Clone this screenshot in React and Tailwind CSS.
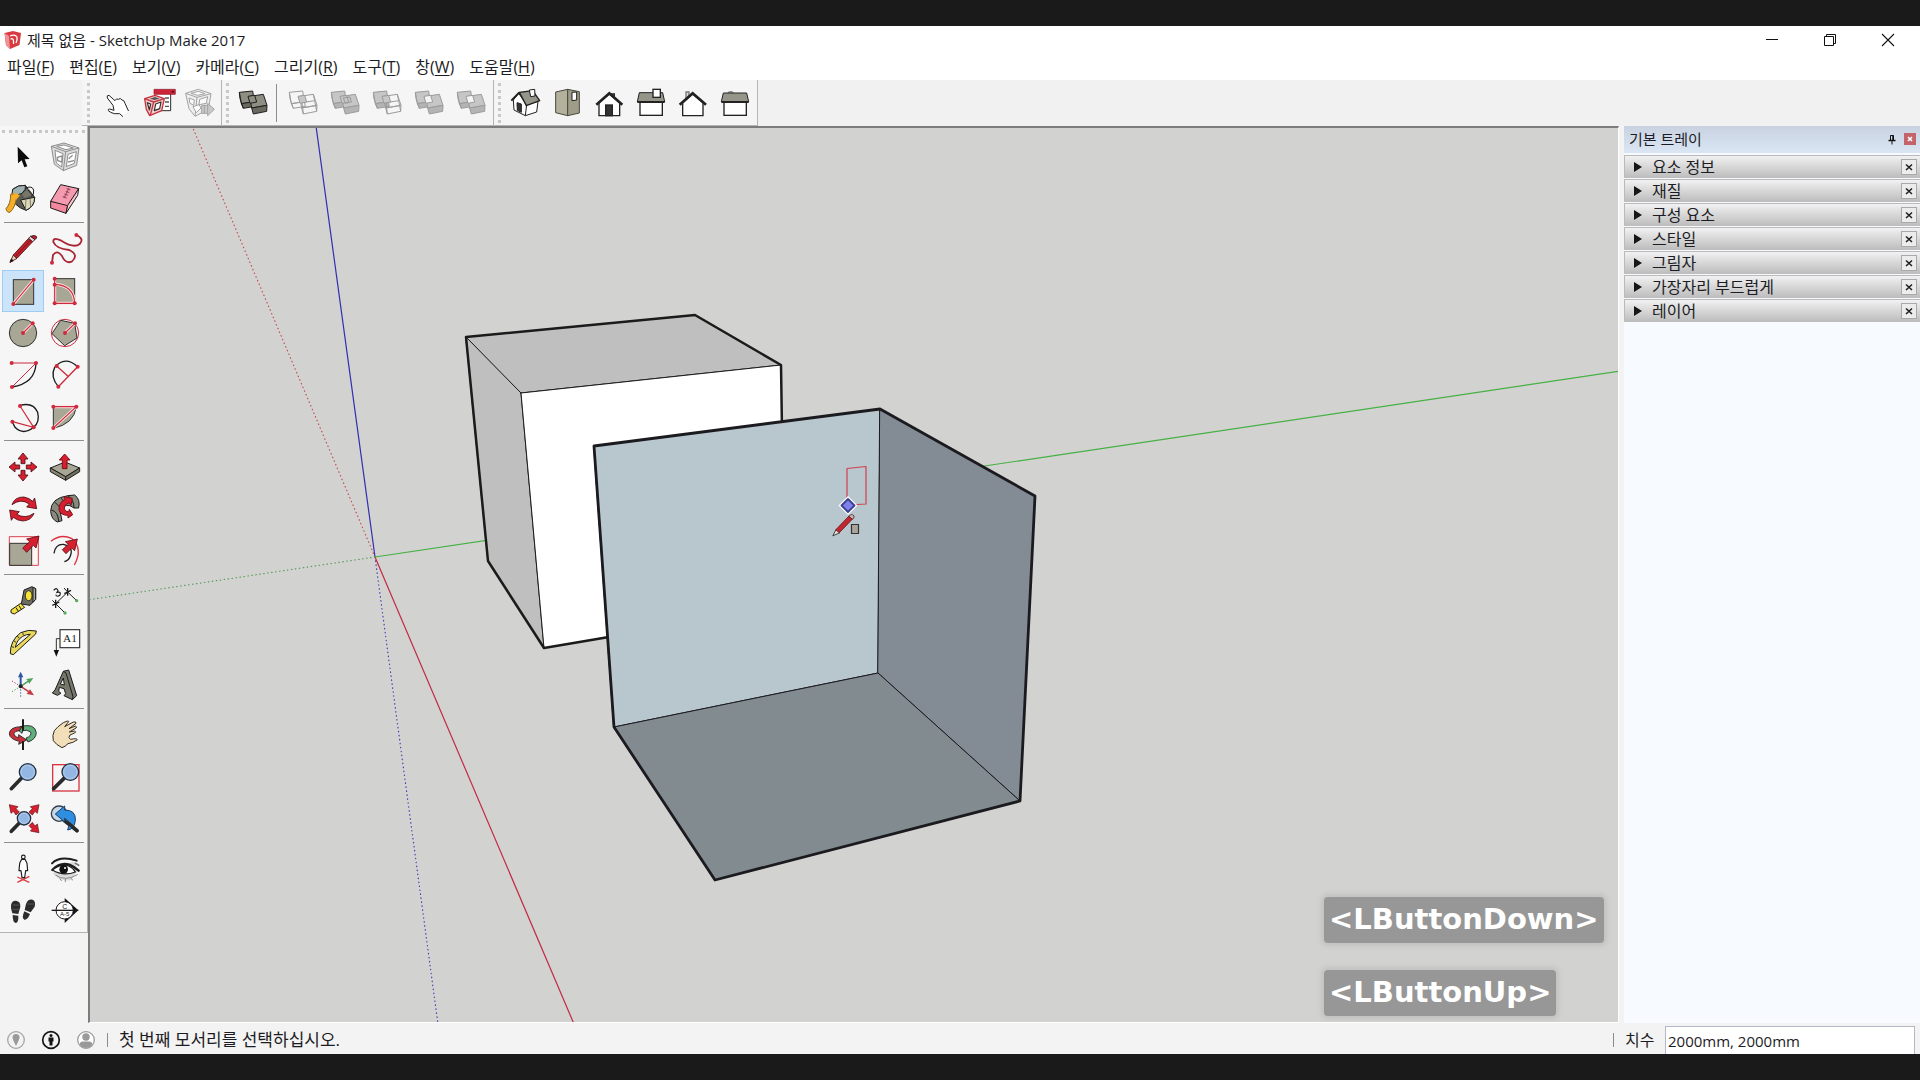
import React from "react";

const UI = "font-['Open_Sans','Noto_Sans_CJK_KR',sans-serif]";

const RED = "#d6202f";
const DARK = "#1c1c1c";
const CLAY = "#a8a795";

/* ---------- shared icon parts ---------- */

function Dots({ pts, r = 6 }) {
  return pts.map(([x, y]) => <circle key={`${x}-${y}`} cx={x} cy={y} r={r} fill="#cf2a3c" />);
}

function RedLine({ d }) {
  return (
    <g fill="none">
      <path d={d} stroke="#fbe3e3" strokeWidth="9" />
      <path d={d} stroke="#cf2a3c" strokeWidth="3.4" />
    </g>
  );
}

function Lens({ cx, cy, r, hx, hy }) {
  return (
    <g>
      <path d={`M${cx - r * 0.7} ${cy + r * 0.7} L${hx} ${hy}`} stroke="#2a2a2a" strokeWidth="11" strokeLinecap="round" />
      <circle cx={cx} cy={cy} r={r} fill="#8fb4e3" stroke="#232f3d" strokeWidth="4" />
      <circle cx={cx} cy={cy} r={r - 5} fill="#93b6e2" stroke="#c3d7f0" strokeWidth="2" />
    </g>
  );
}

/* ---------- left palette ---------- */

const palette = [
  [
    { name: "선택", vb: "6 48 126 126", art: <path d="M53 80 L54 130 L65 121 L73 142 L82 139 L74 118 L89 117 Z" fill="#0c0c0c" /> },
    {
      name: "구성요소 만들기",
      vb: "132 48 126 126",
      art: (
        <g fill="#dcdcdc" stroke="#8e8e8e" strokeWidth="3" strokeLinejoin="round">
          <path d="M154 79 L192 69 L237 84 L230 136 L190 152 L163 133 Z" />
          <path d="M154 79 L197 95 L237 84 M197 95 L190 152" fill="none" />
          <path d="M165 91 L189 101 L185 141 L169 129 Z M204 103 L229 95 L223 130 L199 140 Z" fill="#fff" />
          <path d="M170 79 L192 75 L220 84 L198 89 Z" fill="#fff" />
          <path d="M172 112 L186 108 L186 126 L173 122 Z M206 116 L218 106 M204 126 L222 122" fill="none" strokeWidth="4" />
        </g>
      ),
    },
    {
      name: "페인트통",
      vb: "6 174 126 126",
      art: (
        <g transform="translate(0 -6)" stroke={DARK} strokeWidth="3" strokeLinejoin="round">
          <path d="M38 214 Q54 200 76 202 L104 238 Q104 266 78 277 Q60 272 44 256 Z" fill="#5d5c52" />
          <path d="M62 246 L104 238 Q104 266 78 277 Z" fill="#dcd7b8" />
          <path d="M78 242 L76 276 M90 240 L92 268" stroke="#6b695a" strokeWidth="2.5" />
          <path d="M38 214 Q54 200 76 202 Q80 214 66 226 Q48 236 36 228 Z" fill="#9fb1b0" />
          <path d="M66 228 L86 212 L98 230 L74 240 Z" fill="#77766a" stroke="none" />
          <path d="M78 210 Q96 202 101 216 Q103 230 94 236 M84 216 Q92 226 98 232" fill="none" />
          <path d="M32 229 Q46 224 50 238 Q46 268 30 283 Q20 284 18 272 Q32 258 32 229 Z" fill="#f6ad27" stroke="#8a6418" />
          <path d="M36 226 Q50 224 60 232 L48 246 Q46 232 36 226 Z" fill="#f6ad27" stroke="none" />
        </g>
      ),
    },
    {
      name: "지우개",
      vb: "132 174 126 126",
      art: (
        <g stroke={DARK} strokeWidth="3" strokeLinejoin="round">
          <path d="M182 194 L236 206 L203 266 L152 244 Z" fill="#f59aaf" />
          <path d="M152 244 L203 257 L198 280 L152 264 Z" fill="#f4879e" />
          <path d="M236 206 L233 226 L198 280 L203 256 Z" fill="#fbc5cf" />
          <path d="M207 204 L192 234 M200 206 L211 210 M197 214 L208 218 M193 222 L204 226 M188 230 L200 234" stroke="#8d4656" strokeWidth="3" fill="none" />
        </g>
      ),
    },
  ],
  [
    {
      name: "선",
      vb: "6 324 126 126",
      art: (
        <g stroke="#3b1113" strokeWidth="2.5" strokeLinejoin="round">
          <path d="M30 427 L40 405 L51 415 Z" fill="#e6d4ae" />
          <path d="M30 427 L34 417 L40 422 Z" fill="#111" />
          <path d="M40 405 L86 355 L98 365 L51 415 Z" fill="#c6202c" />
          <path d="M47 409 L92 360" stroke="#7b1219" strokeWidth="3" />
          <path d="M86 355 L92 349 L105 359 L98 365 Z" fill="#d8d8d8" />
          <path d="M92 349 Q104 343 110 350 Q111 355 105 359 Z" fill="#b92331" />
        </g>
      ),
    },
    {
      name: "자유로운 곡선",
      vb: "132 324 126 126",
      art: (
        <g>
          <path d="M229 345 Q254 356 239 372 Q222 386 184 362 Q158 350 160 366 Q168 386 208 390 Q238 405 215 425 Q196 432 186 408 Q172 388 159 405 L156 428" fill="none" stroke="#a72535" strokeWidth="5.5" />
          <Dots pts={[[229, 345], [156, 428]]} />
        </g>
      ),
    },
    {
      name: "직사각형",
      active: true,
      vb: "6 450 126 126",
      art: (
        <g>
          <rect x="40" y="479" width="61" height="74" fill={CLAY} stroke="#333" strokeWidth="3" />
          <RedLine d="M40 552 L101 479" />
          <Dots pts={[[40, 552], [101, 479]]} />
        </g>
      ),
    },
    {
      name: "회전된 직사각형",
      vb: "132 450 126 126",
      art: (
        <g>
          <rect x="164" y="476" width="60" height="74" fill={CLAY} stroke="#333" strokeWidth="3" />
          <RedLine d="M164 476 V550 H224 M164 493 Q222 496 224 550" />
          <Dots pts={[[164, 476], [164, 494], [164, 550], [224, 550]]} />
        </g>
      ),
    },
    {
      name: "원",
      vb: "6 576 126 126",
      art: (
        <g>
          <circle cx="69" cy="639" r="41" fill={CLAY} stroke="#333" strokeWidth="3" />
          <RedLine d="M69 639 L98 610" />
          <Dots pts={[[69, 639], [98, 610]]} />
        </g>
      ),
    },
    {
      name: "다각형",
      vb: "132 576 126 126",
      art: (
        <g>
          <circle cx="195" cy="639" r="41" fill="none" stroke="#cf2a3c" strokeWidth="3" />
          <path d="M182 601 L224 610 L231 654 L194 677 L156 641 Z" fill={CLAY} stroke="#333" strokeWidth="3" />
          <RedLine d="M195 639 L225 610" />
          <Dots pts={[[195, 639], [225, 610]]} />
        </g>
      ),
    },
    {
      name: "호",
      vb: "6 702 126 126",
      art: (
        <g fill="none">
          <path d="M108 729 Q106 790 36 801" stroke={DARK} strokeWidth="4" />
          <path d="M35 729 H108 L36 801" stroke="#cf2a3c" strokeWidth="3" />
          <Dots pts={[[35, 729], [108, 729], [36, 801]]} />
        </g>
      ),
    },
    {
      name: "2점 호",
      vb: "132 702 126 126",
      art: (
        <g fill="none">
          <path d="M175 800 Q150 770 164 742 Q195 706 233 740" stroke={DARK} strokeWidth="4" />
          <path d="M175 800 L233 740 M170 738 L204 769" stroke="#cf2a3c" strokeWidth="4" />
          <Dots pts={[[175, 800], [233, 740], [170, 738]]} />
        </g>
      ),
    },
    {
      name: "3점 호",
      vb: "6 828 126 126",
      art: (
        <g fill="none">
          <path d="M60 856 Q100 846 113 877 Q120 906 101 922 Q70 947 45 922 L37 906" stroke={DARK} strokeWidth="4" />
          <path d="M60 858 L101 922 L37 905" stroke="#cf2a3c" strokeWidth="3.5" />
          <Dots pts={[[60, 858], [101, 922], [37, 905]]} />
        </g>
      ),
    },
    {
      name: "파이",
      vb: "132 828 126 126",
      art: (
        <g>
          <path d="M160 860 H229 Q222 912 160 925 Z" fill={CLAY} stroke="#333" strokeWidth="3" />
          <RedLine d="M160 860 H229 L160 924" />
          <Dots pts={[[160, 860], [229, 860], [160, 924]]} />
        </g>
      ),
    },
  ],
  [
    {
      name: "이동",
      vb: "6 48 126 126",
      art: (
        <g fill={RED} stroke="#4c0e14" strokeWidth="2.5" strokeLinejoin="round">
          <path d="M69 69 L84 87 H75 V101 H63 V87 H54 Z" />
          <path d="M69 153 L84 135 H75 V121 H63 V135 H54 Z" />
          <path d="M27 111 L45 96 V105 H59 V117 H45 V126 Z" />
          <path d="M111 111 L93 96 V105 H79 V117 H93 V126 Z" />
        </g>
      ),
    },
    {
      name: "밀기/끌기",
      vb: "132 48 126 126",
      art: (
        <g stroke={DARK} strokeWidth="3" strokeLinejoin="round">
          <path d="M151 114 L195 96 L239 114 L197 140 Z" fill={CLAY} />
          <path d="M151 114 L197 140 V151 L151 125 Z" fill="#878673" />
          <path d="M239 114 L197 140 V151 L239 125 Z" fill="#737261" />
          <path d="M194 72 L210 90 H201 V116 H187 V90 H178 Z" fill={RED} stroke="#7d1119" />
        </g>
      ),
    },
    {
      name: "회전",
      vb: "6 174 126 126",
      art: (
        <g fill={RED} stroke="#4c0e14" strokeWidth="2.5" strokeLinejoin="round">
          <path d="M36 224 Q44 200 72 201 Q88 204 98 214 L104 204 L110 236 L80 231 L88 222 Q62 204 36 224 Z" />
          <path d="M102 250 Q94 272 68 273 Q50 271 40 262 L34 271 L29 240 L58 245 L50 253 Q76 268 102 250 Z" />
        </g>
      ),
    },
    {
      name: "따라가기",
      vb: "132 174 126 126",
      art: (
        <g stroke={DARK} strokeWidth="3" strokeLinejoin="round">
          <path d="M152 244 Q152 204 204 197 L224 195 Q242 208 236 234 L222 234 Q196 214 180 242 L186 272 L172 276 Q154 268 152 244 Z" fill="#8a897d" />
          <path d="M204 197 Q222 210 222 234 M154 240 Q174 244 176 274 M164 216 L180 232 M182 204 L196 218" fill="none" />
          <path d="M177 240 Q176 216 196 208 L192 200 L217 205 L213 226 L207 218 Q192 224 193 238 Q200 246 206 246 L208 238 L218 254 L204 264 V256 Q182 256 177 240 Z" fill={RED} stroke="#7d1119" />
        </g>
      ),
    },
    {
      name: "배율",
      vb: "6 300 126 126",
      art: (
        <g strokeLinejoin="round">
          <rect x="28" y="320" width="87" height="86" fill="#fff6f6" stroke="#dd4350" strokeWidth="3" />
          <rect x="29" y="340" width="66" height="66" fill={CLAY} stroke="#333" strokeWidth="3" />
          <path d="M117 318 L108 354 L100 346 L80 367 L68 354 L89 335 L80 327 Z" fill={RED} stroke="#5c0d14" strokeWidth="2.5" />
        </g>
      ),
    },
    {
      name: "오프셋",
      vb: "132 300 126 126",
      art: (
        <g fill="none" strokeLinejoin="round">
          <path d="M153 334 Q182 310 216 326 Q250 356 223 405" stroke="#e0303c" strokeWidth="4" />
          <path d="M162 370 Q166 342 190 343 Q222 350 211 378 Q206 392 193 395" stroke={DARK} strokeWidth="4" />
          <path d="M232 327 L224 362 L215 354 L198 371 L187 359 L205 343 L196 335 Z" fill={RED} stroke="#5c0d14" strokeWidth="2.5" />
        </g>
      ),
    },
  ],
  [
    {
      name: "줄자",
      vb: "6 450 126 126",
      art: (
        <g stroke={DARK} strokeWidth="3" strokeLinejoin="round">
          <path d="M72 480 L96 470 L107 476 V508 L90 526 L64 522 Z" fill="#6d6c62" />
          <path d="M99 472 L107 476 V508 L99 517 Z" fill="#a9a899" />
          <ellipse cx="86" cy="497" rx="10" ry="15" fill="#f7e23a" strokeWidth="2.5" />
          <path d="M62 520 L74 532 L43 552 L33 548 V540 Z" fill="#f3df3d" />
          <path d="M48 533 L55 544 M57 527 L65 540" />
        </g>
      ),
    },
    {
      name: "치수",
      vb: "132 450 126 126",
      art: (
        <g fill="none" stroke={DARK} strokeWidth="3">
          <path d="M167 521 L203 486 M167 521 L194 548 M203 486 L230 512 M157 511 L167 521 M192 474 L203 486" />
          <path d="M203 474 V497 M193 491 L213 481 M167 509 V534 M157 526 L178 516" strokeWidth="4" />
          <path d="M161 481 Q170 470 174 482 L171 487 Q184 484 180 495 Q172 503 167 494" strokeWidth="3.5" />
          <circle cx="230" cy="512" r="5" fill="#57ad5b" stroke="none" />
          <circle cx="195" cy="549" r="5" fill="#57ad5b" stroke="none" />
        </g>
      ),
    },
    {
      name: "각도기",
      vb: "6 576 126 126",
      art: (
        <g stroke={DARK} strokeWidth="3" strokeLinejoin="round">
          <path d="M31 671 Q30 632 62 608 Q86 597 109 603 L107 612 L40 674 Z" fill="#e9d85a" />
          <path d="M46 652 Q50 630 68 619 Q80 612 91 613 Z" fill="#f4f4f4" />
          <path d="M34 650 L42 652 M41 632 L48 637 M52 618 L58 625 M68 608 L70 615" strokeWidth="2.5" />
        </g>
      ),
    },
    {
      name: "텍스트",
      vb: "132 576 126 126",
      art: (
        <g>
          <rect x="180" y="599" width="59" height="54" fill="#fff" stroke="#333" strokeWidth="3.5" />
          <path d="M180 626 H169 V662" fill="none" stroke="#333" strokeWidth="3" />
          <path d="M161 660 H177 L169 680 Z" fill="#111" />
          <text x="210" y="636" textAnchor="middle" fontSize="34" fontFamily="Liberation Serif, serif" fill="#222">A1</text>
        </g>
      ),
    },
    {
      name: "축",
      vb: "6 702 126 126",
      art: (
        <g fill="none" strokeWidth="4">
          <path d="M62 769 V740" stroke="#2b57a8" strokeWidth="6" />
          <path d="M62 725 L70 742 H54 Z" fill="#2b57a8" />
          <path d="M62 769 L84 754" stroke="#52a35a" strokeWidth="5" />
          <path d="M100 744 L88 761 L79 747 Z" fill="#52a35a" />
          <path d="M62 769 L86 785" stroke="#c43b44" strokeWidth="5" />
          <path d="M102 796 L80 792 L90 778 Z" fill="#c43b44" />
          <path d="M62 769 V802" stroke="#2b57a8" strokeDasharray="4 5" strokeWidth="3" />
          <path d="M62 769 L36 753" stroke="#c43b44" strokeDasharray="4 5" strokeWidth="3" />
          <path d="M62 769 L36 785" stroke="#52a35a" strokeDasharray="4 5" strokeWidth="3" />
          <circle cx="62" cy="769" r="6" fill="#222" />
        </g>
      ),
    },
    {
      name: "3D 텍스트",
      vb: "132 702 126 126",
      art: (
        <g stroke={DARK} strokeWidth="3" strokeLinejoin="round">
          <path d="M190 724 L206 720 L230 797 L217 809 L192 797 L197 791 L192 776 L178 772 L176 784 L183 790 L172 796 L157 789 L165 780 Z" fill="#77776c" />
          <path d="M190 724 L198 729 L219 800 L217 809" fill="none" />
          <path d="M190 744 L181 762 L193 765 Z" fill="#f4f4f4" />
        </g>
      ),
    },
  ],
  [
    {
      name: "궤도",
      vb: "6 42 126 126",
      art: (
        <g stroke={DARK} strokeWidth="2.5" strokeLinejoin="round">
          <path d="M60 80 Q104 68 109 98 Q108 118 84 126 L78 114 Q96 108 92 96 Q80 88 68 92 L66 100 L52 88 Z" fill="#5fae7c" />
          <path d="M66 80 Q28 80 28 102 Q30 118 58 124 L56 133 L80 120 L56 104 V113 Q42 110 42 100 Q46 92 58 92 Z" fill="#c9303c" />
          <path d="M69 58 V92 M69 124 V150" stroke="#1b1b1b" strokeWidth="6" />
        </g>
      ),
    },
    {
      name: "이동 보기",
      vb: "132 42 126 126",
      art: (
        <path
          d="M160 122 Q156 106 163 92 Q172 80 190 68 Q207 60 206 65 L194 80 L220 66 Q230 64 228 70 L207 86 L226 78 Q232 80 228 84 L208 96 L224 93 Q230 95 224 99 L210 105 Q202 114 212 118 Q230 114 232 119 Q222 128 204 131 Q196 140 186 143 Q168 134 160 122 Z"
          fill="#f2dfba"
          stroke="#332a20"
          strokeWidth="3"
          strokeLinejoin="round"
        />
      ),
    },
    { name: "확대/축소", vb: "6 168 126 126", art: <Lens cx={83} cy={216} r={25} hx={34} hy={266} /> },
    {
      name: "창 확대",
      vb: "132 168 126 126",
      art: (
        <g>
          <rect x="158" y="194" width="79" height="79" fill="none" stroke="#d93642" strokeWidth="4" />
          <Lens cx={211} cy={216} r={25} hx={161} hy={266} />
        </g>
      ),
    },
    {
      name: "범위 확대",
      vb: "6 294 126 126",
      art: (
        <g>
          <g fill={RED} stroke="#5c0d14" strokeWidth="2">
            <path d="M28 314 L54 320 L48 326 L58 336 L48 345 L40 334 L33 340 Z" />
            <path d="M117 314 L91 320 L97 326 L87 336 L97 345 L105 334 L112 340 Z" />
            <path d="M117 398 L91 393 L97 387 L87 377 L97 367 L105 378 L112 372 Z" />
          </g>
          <Lens cx={72} cy={355} r={20} hx={34} hy={394} />
        </g>
      ),
    },
    {
      name: "이전",
      vb: "132 294 126 126",
      art: (
        <g>
          <path d="M192 361 L231 392" stroke="#2a2a2a" strokeWidth="11" strokeLinecap="round" />
          <circle cx="177" cy="341" r="23" fill="#c9d6e6" stroke="#34404e" strokeWidth="4" />
          <path d="M166 342 L194 318 V330 Q228 330 226 360 Q224 388 203 390 Q214 362 194 355 V366 Z" fill="#2f8ee0" stroke="#173f68" strokeWidth="3" strokeLinejoin="round" />
          <path d="M206 370 L231 392" stroke="#2a2a2a" strokeWidth="10" strokeLinecap="round" />
        </g>
      ),
    },
  ],
  [
    {
      name: "카메라 배치",
      vb: "6 444 126 126",
      art: (
        <g fill="none" strokeLinejoin="round">
          <path d="M52 547 L88 529 M52 531 L88 547" stroke="#e2373f" strokeWidth="4" />
          <circle cx="70" cy="471" r="5.5" fill="#fff" stroke={DARK} strokeWidth="3.4" />
          <path d="M65 478 H75 L81 490 L83 512 L77 512 L74 533 H66 L63 512 L57 512 L59 490 Z" fill="#fff" stroke={DARK} strokeWidth="3.4" />
        </g>
      ),
    },
    {
      name: "둘러보기",
      vb: "132 444 126 126",
      art: (
        <g fill="none" stroke={DARK} strokeLinecap="round">
          <path d="M158 520 Q176 546 214 540 L234 508 L220 484 Z" fill="#dadada" stroke="none" />
          <path d="M156 490 Q180 466 230 482" strokeWidth="6" />
          <path d="M157 510 Q180 486 208 494 Q226 502 236 512" strokeWidth="7" />
          <path d="M157 510 Q190 530 226 516 Q220 504 206 498 Q184 488 157 510 Z" fill="#fff" strokeWidth="4" />
          <circle cx="191" cy="508" r="13" fill="#111" stroke="none" />
          <circle cx="195" cy="504" r="3" fill="#fff" stroke="none" />
          <path d="M168 526 Q196 546 232 524 M180 536 L184 542 M196 538 V545 M212 534 L218 540" stroke="#8c8c8c" strokeWidth="3" />
          <path d="M226 490 L236 496" stroke="#777" strokeWidth="5" />
        </g>
      ),
    },
    {
      name: "이동 시점",
      vb: "6 570 126 126",
      art: (
        <g fill="#2c2c2c">
          <path d="M33 615 Q36 601 48 602 Q62 604 61 620 L55 642 L37 640 Q32 628 33 615 Z" />
          <path d="M38 645 L55 647 Q56 668 47 669 Q38 668 38 645 Z" />
          <path d="M78 612 Q84 596 98 599 Q108 604 104 620 L92 637 L74 630 Z" />
          <path d="M73 634 L90 642 Q82 661 73 659 Q64 654 73 634 Z" />
          <path d="M38 615 H58 M37 628 H57 M82 612 H102" stroke="#6a6a6a" strokeWidth="2" />
        </g>
      ),
    },
    {
      name: "단면",
      vb: "132 570 126 126",
      art: (
        <g>
          <path d="M194 594 L235 631 L194 669 Z" fill="#111" />
          <circle cx="194" cy="631" r="26" fill="#fff" stroke={DARK} strokeWidth="3" />
          <path d="M155 631 H235" stroke={DARK} strokeWidth="4" />
          <text x="194" y="626" textAnchor="middle" fontSize="21" fontFamily="Liberation Sans, sans-serif" fill="#222">C</text>
          <text x="194" y="649" textAnchor="middle" fontSize="18" fontFamily="Liberation Sans, sans-serif" fill="#222">A-5</text>
        </g>
      ),
    },
  ],
];

function ToolButton({ tool }) {
  return (
    <button
      type="button"
      aria-label={tool.name}
      className={
        tool.active
          ? "size-[42px] bg-[#cce4f9] outline outline-1 -outline-offset-1 outline-[#9fcdf2]"
          : "size-[42px]"
      }
    >
      <svg viewBox={tool.vb} className="block size-full">
        {tool.art}
      </svg>
    </button>
  );
}

/* ---------- top toolbar ---------- */

function Solids({ mode }) {
  const dark = mode === "shell";
  const stroke = dark ? "#1e1e1c" : "#9b9b9b";
  const fill = dark ? "#8f8e83" : "#c6c6c6";
  const low = dark ? "#6a6960" : "#b4b4b4";
  const wireBack = mode === "intersect";
  const wireFront = mode === "intersect" || mode === "subtract";
  const hollow = mode === "trim" || mode === "split";
  return (
    <g stroke={stroke} strokeWidth="3" strokeLinejoin="round">
      <path d="M22 49 L62 45 L67 77 L28 83 Z" fill={wireBack ? "none" : fill} />
      <path d="M28 83 L67 77 L70 91 L34 97 Z" fill={wireBack ? "none" : low} />
      <path d="M22 49 L24 68 L34 97" fill="none" />
      <path d="M53 61 L94 55 L105 88 L59 96 Z" fill={wireFront ? "none" : fill} />
      <path d="M59 96 L105 88 L104 106 L64 114 Z" fill={wireFront ? "none" : low} />
      {wireFront && <path d="M53 61 L60 80 L64 114 M60 80 L98 74 M94 55 L98 74 L104 106" fill="none" />}
      <path d="M48 61 L68 58 L74 78 L54 82 Z" fill={hollow ? "#f4f4f4" : fill} />
      {mode === "union" && <path d="M58 66 L78 63 L82 78 L64 82 Z" fill="none" />}
    </g>
  );
}

const topGroups = [
  {
    label: "동적 구성요소",
    lead: "pl-[5px] gap-[5px]",
    items: [
      {
        name: "상호 작용",
        vb: "46 18 126 126",
        art: (
          <g fill="#fff" stroke="#222" strokeWidth="3" strokeLinejoin="round" strokeLinecap="round">
            <path d="M130 121 L120 113 L104 113 Q92 110 86 104 Q84 99 90 99 L103 103 L100 88 L83 66 Q80 57 88 58 L106 74 Q110 66 116 70 Q122 64 127 72 Q134 72 136 82 L146 104 Z" stroke="none" />
            <path d="M129 121 L120 113 L104 113 Q92 110 86 104 Q84 99 90 99 L103 103 L100 88 L83 66 Q80 57 88 58 L106 74 Q110 66 116 70 Q122 64 127 72 Q134 72 136 82 L146 104" fill="none" />
          </g>
        ),
      },
      {
        name: "구성요소 옵션",
        vb: "172 18 126 126",
        art: (
          <g strokeLinejoin="round">
            <path d="M224 52 H273 V104 H236" fill="#fff" stroke="#2b2b2b" strokeWidth="3" />
            <rect x="223" y="40" width="64" height="15" fill="#cf2338" stroke="#8a1625" strokeWidth="2" />
            <path d="M275 45 H284 L280 51 Z" fill="#3a0a10" />
            <path d="M256 66 H268 M256 78 H268 M256 91 H268" stroke="#555" strokeWidth="4" />
            <path d="M195 68 L226 58 L254 68 L246 104 L210 119 L200 100 Z" fill="#e9cfcf" stroke="#c8323f" strokeWidth="4" />
            <path d="M195 68 L222 78 L254 68 M222 78 L212 118" fill="none" stroke="#c8323f" strokeWidth="4" />
            <path d="M228 84 L244 78 L240 98 L224 104 Z M203 80 L213 84 L209 102 Z" fill="#fff" stroke="#3b2a2a" strokeWidth="3.5" />
            <path d="M210 68 L226 63 L240 68 L224 72 Z" fill="#555" />
          </g>
        ),
      },
      {
        name: "구성요소 속성",
        vb: "298 18 126 126",
        art: (
          <g fill="#efefef" stroke="#a3a3a3" strokeWidth="3" strokeLinejoin="round">
            <path d="M318 52 L356 40 L394 53 L386 100 L346 121 L328 98 Z" />
            <path d="M318 52 L352 64 L394 53 M352 64 L346 120" fill="none" />
            <path d="M334 52 L356 46 L376 53 L354 58 Z M328 66 L344 72 L342 88 L331 82 Z M360 70 L384 62 L380 82 L358 86 Z" fill="#fafafa" />
            <path d="M340 92 L358 86 L364 96 L350 110 Z" fill="#fff" />
            <path d="M366 88 H384 V82 L404 100 L384 119 V112 H366 Z" fill="#c9c9c9" />
            <path d="M374 88 V112 M384 88 V112" fill="none" />
          </g>
        ),
      },
    ],
  },
  {
    label: "솔리드 도구",
    lead: "pl-[4px] pr-px gap-[3px]",
    splitAfter: 0,
    items: [
      { name: "외부 셸", vb: "0 18 126 126", art: <Solids mode="shell" /> },
      { name: "교차", vb: "0 18 126 126", art: <Solids mode="intersect" /> },
      { name: "합집합", vb: "0 18 126 126", art: <Solids mode="union" /> },
      { name: "빼기", vb: "0 18 126 126", art: <Solids mode="subtract" /> },
      { name: "잘라내기", vb: "0 18 126 126", art: <Solids mode="trim" /> },
      { name: "분할", vb: "0 18 126 126", art: <Solids mode="split" /> },
    ],
  },
  {
    label: "보기",
    lead: "pl-[4px] pr-px gap-[3px]",
    items: [
      {
        name: "등각투영",
        vb: "72 36 126 126",
        art: (
          <g stroke="#1e1e1e" strokeWidth="3" strokeLinejoin="round">
            <path d="M100 90 L116 70 L140 104 L174 94 L170 126 L136 137 L102 120 Z" fill="#fff" />
            <path d="M140 104 L136 137" fill="none" />
            <path d="M118 67 L158 62 L179 92 L139 107 Z" fill="#96958a" strokeWidth="4" />
            <path d="M118 67 L94 92" fill="none" strokeWidth="6" />
            <path d="M111 98 L124 102 V127 L112 121 Z" fill="#333" />
            <path d="M148 60 L164 58 L165 78 L152 80 Z" fill="#fff" />
          </g>
        ),
      },
      {
        name: "위",
        vb: "198 36 126 126",
        art: (
          <g stroke="#4a493f" strokeWidth="3" strokeLinejoin="round">
            <path d="M227 66 L263 58 V137 L227 128 Z" fill="#b3b19b" />
            <path d="M263 58 L298 65 V129 L263 137 Z" fill="#9f9d88" />
            <path d="M276 67 L290 66 V90 L276 92 Z" fill="#fff" stroke="#1e1e1e" />
          </g>
        ),
      },
      {
        name: "앞",
        vb: "324 36 126 126",
        art: (
          <g stroke="#222" strokeWidth="4">
            <path d="M390 78 V72 H403 V90" fill="#aaa" />
            <path d="M357 98 L388 72 L419 98 V137 H357 Z" fill="#fff" />
            <path d="M349 104 L388 70 L427 104" fill="none" strokeWidth="8" />
            <rect x="377" y="105" width="20" height="32" fill="#333" />
          </g>
        ),
      },
      {
        name: "오른쪽",
        vb: "450 36 126 126",
        art: (
          <g stroke="#222" strokeWidth="4">
            <rect x="480" y="94" width="67" height="42" fill="#fff" />
            <path d="M478 68 H548 L554 95 H472 Z" fill="#96958a" strokeWidth="3" />
            <path d="M472 96 H554" strokeWidth="6" />
            <rect x="519" y="58" width="22" height="24" fill="#fff" />
          </g>
        ),
      },
      {
        name: "뒤",
        vb: "576 36 126 126",
        art: (
          <g stroke="#222" strokeWidth="4">
            <path d="M618 88 V66 H627 V80" fill="#ddd" stroke="#777" />
            <path d="M608 98 L638 72 L669 98 V137 H608 Z" fill="#fff" />
            <path d="M599 104 L638 70 L678 104" fill="none" strokeWidth="8" />
          </g>
        ),
      },
      {
        name: "왼쪽",
        vb: "702 36 126 126",
        art: (
          <g stroke="#222" strokeWidth="4">
            <path d="M744 68 Q752 62 760 68" fill="#bbb" stroke="#888" />
            <rect x="732" y="94" width="67" height="42" fill="#fff" />
            <path d="M730 69 H800 L806 95 H724 Z" fill="#96958a" strokeWidth="3" />
            <path d="M724 96 H806" strokeWidth="6" />
          </g>
        ),
      },
    ],
  },
];

function Toolbar() {
  return (
    <div className="flex h-[46px] shrink-0 bg-[#f1f1f1] pl-[82px]">
      {topGroups.map((group) => (
        <div
          key={group.label}
          role="toolbar"
          aria-label={group.label}
          className={`flex items-center border-r border-b border-[#b4b4b4] bg-[#f5f5f5] ${group.lead}`}
        >
          <span className="h-10 w-[3px] border-l-3 border-dotted border-[#c8c8c8]" />
          <div className="flex items-center">
            {group.items.map((tool, i) => (
              <React.Fragment key={tool.name}>
                <ToolButton tool={tool} />
                {group.splitAfter === i && <span className="mr-[5px] ml-[2px] h-[38px] w-px bg-[#8c8c8c]" />}
              </React.Fragment>
            ))}
          </div>
        </div>
      ))}
      <div className="flex-1" />
    </div>
  );
}

/* ---------- title and menus ---------- */

const menus = [
  ["파일", "F"],
  ["편집", "E"],
  ["보기", "V"],
  ["카메라", "C"],
  ["그리기", "R"],
  ["도구", "T"],
  ["창", "W"],
  ["도움말", "H"],
];

function TitleBar() {
  return (
    <header className="shrink-0 bg-white">
      <div className="flex h-[28px] items-center pl-1">
        <svg viewBox="0 0 18 20" className="mr-[5px] h-5 w-[18px]">
          <path d="M0.500 3 L9 1 L17 3 L15.500 15 L6 19 L2 15 Z" fill="#d93a41" />
          <path d="M0.500 3 L5 6 L6 19 L2 15 Z" fill="#ee9294" />
          <path d="M6 6 Q11 4 13 7 Q13.500 10 12 13 M6.500 9 Q9.500 8 9.500 11 V14" fill="none" stroke="#fff" strokeWidth="1.3" />
        </svg>
        <h1 className="flex-1 text-[15px] leading-5">제목 없음 - SketchUp Make 2017</h1>
        <button type="button" aria-label="최소화" className="flex h-7 w-[58px] items-center justify-center">
          <svg viewBox="0 0 14 14" className="size-[14px]"><path d="M1 6.500 H13" stroke="#111" /></svg>
        </button>
        <button type="button" aria-label="이전 크기로" className="flex h-7 w-[58px] items-center justify-center">
          <svg viewBox="0 0 14 14" className="size-[14px]" fill="none" stroke="#111">
            <path d="M1.500 3.500 H10.500 V12.500 H1.500 Z M3.500 3.500 V1.500 H12.500 V10.500 H10.500" />
          </svg>
        </button>
        <button type="button" aria-label="닫기" className="mr-[3px] flex h-7 w-[58px] items-center justify-center">
          <svg viewBox="0 0 14 14" className="size-[14px]"><path d="M1 1 L13 13 M13 1 L1 13" stroke="#111" strokeWidth="1.1" /></svg>
        </button>
      </div>
      <nav className="flex h-[26px] items-center gap-[15px] pl-[7px]">
        {menus.map(([label, key]) => (
          <button key={key} type="button" className="text-base leading-6 whitespace-nowrap">
            {label}(<span className="underline underline-offset-2">{key}</span>)
          </button>
        ))}
      </nav>
    </header>
  );
}

/* ---------- modelling view ---------- */

function Scene() {
  return (
    <svg viewBox="91 128 1528 894" preserveAspectRatio="xMinYMin slice" className="block size-full" strokeLinejoin="round" strokeLinecap="round">
      <g fill="none" strokeWidth="1.2">
        <path d="M376 557 L317 126" stroke="#2f2fb4" />
        <path d="M376 557 L439 1024" stroke="#4040b4" strokeDasharray="0.5 3.5" />
        <path d="M376 557 L575 1024" stroke="#c22a44" />
        <path d="M376 557 L193 126" stroke="#c84a52" strokeDasharray="0.5 3.5" />
        <path d="M376 557 L1622 371" stroke="#45b145" />
        <path d="M376 557 L88 600" stroke="#5a9a5a" strokeDasharray="0.5 3.5" />
      </g>
      <g stroke="#1b1b1b" strokeWidth="1">
        <path d="M467 337 L696 315 L782 365 L522 393 Z" fill="#bfbfbf" />
        <path d="M467 337 L522 393 L545 648 L489 561 Z" fill="#bfbfbf" />
        <path d="M522 393 L782 365 L783 600 L608 636 L545 648 Z" fill="#fff" stroke="none" />
        <path d="M522 393 L782 365 M522 393 L545 648" fill="none" />
        <path d="M783 430 L782 365 L696 315 L467 337 L489 561 L545 648 L610 637" fill="none" strokeWidth="2.5" />
      </g>
      <g stroke="#1b1b1f" strokeWidth="1">
        <path d="M595 446 L881 409 L879 673 L615 727 Z" fill="#b8c6ce" />
        <path d="M881 409 L1036 496 L1021 801 L879 673 Z" fill="#838c95" />
        <path d="M615 727 L879 673 L1021 801 L716 880 Z" fill="#828c90" />
        <path d="M595 446 L881 409 L1036 496 L1021 801 L716 880 L615 727 Z" fill="none" strokeWidth="2.8" />
      </g>
      <path d="M848 505 V468.500 L867 466.500 V504 L849 505" fill="none" stroke="#d2404c" strokeWidth="1.2" />
      <path d="M849 496 L858.500 505.500 L849 515 L839.500 505.500 Z" fill="#fff" />
      <path d="M849 499 L855.500 505.500 L849 512 L842.500 505.500 Z" fill="#8080ea" stroke="#3a3f92" strokeWidth="1.8" />
      <g stroke="#5a1a1e" strokeWidth="0.8">
        <path d="M834 535.500 L837 529.500 L840.500 532.500 Z" fill="#e8e0d0" stroke="#222" />
        <path d="M837 529.500 L850 516 L853.500 519 L840.500 532.500 Z" fill="#c4262f" />
        <path d="M850 516 Q853 513 855 516 Q856 518 853.500 519 Z" fill="#bbb" />
      </g>
      <rect x="852.500" y="524.500" width="7" height="9" fill="#aaa49a" stroke="#333" strokeWidth="1.2" />
    </svg>
  );
}

function KeyCap({ children }) {
  return (
    <div className="flex h-[46px] items-center rounded-[4px] bg-[#979797] px-[5px] pb-[3px] font-['DejaVu_Sans','Liberation_Sans',sans-serif] text-[29px] leading-9 font-bold text-white shadow-[0_0_4px_3px_rgba(190,190,190,0.8)]">
      {children}
    </div>
  );
}

/* ---------- tray ---------- */

const trays = ["요소 정보", "재질", "구성 요소", "스타일", "그림자", "가장자리 부드럽게", "레이어"];

function Tray() {
  return (
    <aside className="flex w-[296px] shrink-0 flex-col bg-[#f7faff]">
      <div className="flex h-[27px] items-center bg-linear-to-b from-[#c8d2e0] to-[#dbe6f5] pr-[4px] pb-px pl-[5px]">
        <h2 className="flex-1 text-[15px] leading-5">기본 트레이</h2>
        <button type="button" aria-label="자동 숨기기" className="mr-[8px] h-3 w-2">
          <svg viewBox="0 0 8 12" className="block size-full" fill="none" stroke="#111">
            <path d="M2.500 7 V2.500 H5.500 V7" />
            <path d="M5 2.500 V7 M0.500 7.500 H7.500" strokeWidth="1.5" />
            <path d="M4 8 V11.500" />
          </svg>
        </button>
        <button type="button" aria-label="트레이 닫기" className="size-3 bg-[#c4636a]">
          <svg viewBox="0 0 12 12" className="block size-full"><path d="M4 4 L8 8 M8 4 L4 8" stroke="#fff" strokeWidth="1.6" /></svg>
        </button>
      </div>
      <div className="flex flex-col gap-px bg-[#f7faff] pt-[2px]">
        {trays.map((name) => (
          <div key={name} className="flex h-[23px] items-center border-t border-l border-[#bababa] bg-linear-to-b from-[#f2f2f2] to-[#bcbcbc] pr-[3px]">
            <button type="button" className="flex h-full flex-1 items-center pb-px pl-[9px] text-left text-base leading-5">
              <svg viewBox="0 0 8 10" className="mr-[10px] h-[10px] w-2"><path d="M0 0 L8 5 L0 10 Z" fill="#161616" /></svg>
              {name}
            </button>
            <button type="button" aria-label={`${name} 닫기`} className="size-4 border border-[#a9a9a9] bg-[#ececec]">
              <svg viewBox="0 0 14 14" className="block size-full"><path d="M4 4.500 L10 10 M10 4.500 L4 10" stroke="#222" strokeWidth="1.6" /></svg>
            </button>
          </div>
        ))}
      </div>
    </aside>
  );
}

/* ---------- status bar ---------- */

function StatusBar() {
  return (
    <footer className="flex h-[31px] shrink-0 items-center overflow-hidden bg-[#f3f3f3] pt-[3px] pl-[6px]">
      <div className="flex gap-[15px]">
        <button type="button" aria-label="위치 정보" className="size-5">
          <svg viewBox="0 0 20 20" className="block size-full">
            <circle cx="10" cy="10" r="8.300" fill="none" stroke="#a5a5a5" strokeWidth="1.3" />
            <path d="M10 16 Q6.500 9 6.500 7.500 A3.500 3.500 0 0 1 13.500 7.500 Q13.500 9 10 16 Z" fill="#9a9a9a" />
          </svg>
        </button>
        <button type="button" aria-label="제작자 정보" className="size-5">
          <svg viewBox="0 0 20 20" className="block size-full">
            <circle cx="10" cy="10" r="8.300" fill="none" stroke="#161616" strokeWidth="1.7" />
            <circle cx="10" cy="5.500" r="1.500" fill="#161616" />
            <path d="M7.500 7.500 H12.500 V11.500 H11.500 V15.500 H8.500 V11.500 H7.500 Z" fill="#161616" />
          </svg>
        </button>
        <button type="button" aria-label="로그인" className="size-5">
          <svg viewBox="0 0 20 20" className="block size-full">
            <circle cx="10" cy="10" r="8.300" fill="#fff" stroke="#9c9c9c" strokeWidth="1.3" />
            <circle cx="10" cy="7" r="3.700" fill="#999" />
            <path d="M3.500 14.500 Q4 11.500 7 11.500 H13 Q16 11.500 16.500 14.500 Q14 18 10 18 Q6 18 3.500 14.500 Z" fill="#999" />
          </svg>
        </button>
      </div>
      <span className="mr-[11px] ml-[11px] h-[14px] w-px bg-[#8c8c8c]" />
      <p className="flex-1 text-[17px] leading-6">첫 번째 모서리를 선택하십시오.</p>
      <span className="mr-[11px] h-[14px] w-px bg-[#8c8c8c]" />
      <label htmlFor="measure" className="w-[40px] text-base leading-6">치수</label>
      <input
        id="measure"
        defaultValue="2000mm, 2000mm"
        className="h-[28px] w-[250px] border border-b-0 border-[#b3b7c6] bg-white px-[2px] text-[15px] leading-6 outline-none"
      />
      <span className="w-[5px]" />
    </footer>
  );
}

/* ---------- page ---------- */

export default function App() {
  return (
    <div className={`flex h-screen flex-col overflow-hidden bg-[#1a1a1a] py-[26px] text-[#1c1c24] ${UI}`}>
      <TitleBar />
      <Toolbar />
      <main className="flex min-h-0 flex-1 bg-[#f3f3f3]">
        <div className="w-[88px] shrink-0">
          <div role="toolbar" aria-label="큰 도구 세트" aria-orientation="vertical" className="border-r border-b border-[#b4b4b4] bg-[#f6f6f6] pt-[4px] pl-[2px]">
            <span className="mb-[3px] block h-[3px] w-[83px] border-t-3 border-dotted border-[#c8c8c8]" />
            {palette.map((group, i) => (
              <div key={group[0].name}>
                {i > 0 && <hr className="mt-[2px] mr-[3px] mb-[5px] ml-[2px] border-t border-[#8f8f8f]" />}
                <div className="grid w-[84px] grid-cols-2">
                  {group.map((tool) => (
                    <ToolButton key={tool.name} tool={tool} />
                  ))}
                </div>
              </div>
            ))}
          </div>
        </div>
        <section className="relative min-w-0 flex-1 overflow-hidden border-t-2 border-r border-b border-l-2 border-t-[#7c7c7c] border-r-white border-b-white border-l-[#7c7c7c] bg-[#d2d2d0]">
          <Scene />
          <div className="absolute right-[15px] bottom-[6px] flex w-[279px] flex-col items-start gap-[27px]">
            <KeyCap>&lt;LButtonDown&gt;</KeyCap>
            <KeyCap>&lt;LButtonUp&gt;</KeyCap>
          </div>
        </section>
        <div className="w-[5px] shrink-0" />
        <Tray />
      </main>
      <StatusBar />
    </div>
  );
}
